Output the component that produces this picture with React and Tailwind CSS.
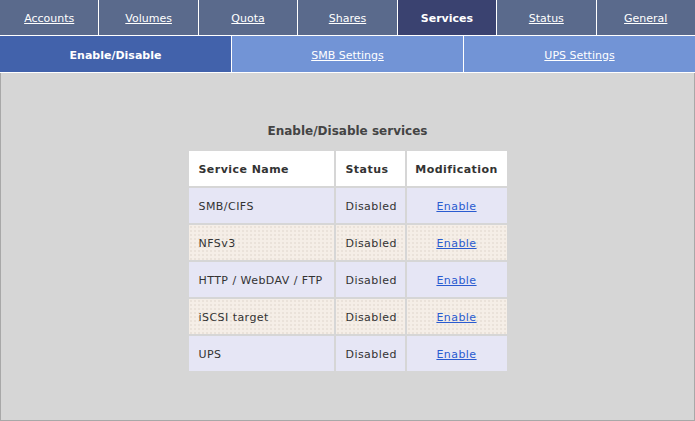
const mainTabs = ["Accounts", "Volumes", "Quota", "Shares", "Services", "Status", "General"];
const subTabs = ["Enable/Disable", "SMB Settings", "UPS Settings"];

const services = [
  { name: "SMB/CIFS", status: "Disabled" },
  { name: "NFSv3", status: "Disabled" },
  { name: "HTTP / WebDAV / FTP", status: "Disabled" },
  { name: "iSCSI target", status: "Disabled" },
  { name: "UPS", status: "Disabled" },
];

export default function App() {
  return (
    <div className="w-[695px] h-[421px] bg-white font-['DejaVu_Sans',Verdana,sans-serif] text-[11px] overflow-hidden">
      {/* main tabs */}
      <div className="flex gap-px h-[35px]">
        {mainTabs.map((t) =>
          t === "Services" ? (
            <div key={t} className="flex-1 flex items-center justify-center pt-[4px] bg-[#3a4270] text-white font-bold">
              {t}
            </div>
          ) : (
            <div key={t} className="flex-1 flex items-center justify-center pt-[4px] bg-[#5a6a8c] text-white underline">
              {t}
            </div>
          )
        )}
      </div>
      {/* sub tabs */}
      <div className="flex gap-px h-[36px] mt-px">
        {subTabs.map((t, i) =>
          i === 0 ? (
            <div key={t} className="flex-1 flex items-center justify-center pt-[4px] bg-[#4262ab] text-white font-bold">
              {t}
            </div>
          ) : (
            <div key={t} className="flex-1 flex items-center justify-center pt-[4px] bg-[#7294d6] text-white underline">
              {t}
            </div>
          )
        )}
      </div>
      {/* content */}
      <div className="mt-px h-[348px] bg-[#d6d6d6] border border-t-0 border-[#a8a8a8] pt-[51px]">
        <div className="text-center font-bold text-[12px] leading-[15px] text-[#444]">Enable/Disable services</div>
        <table className="mx-auto mt-[10px] border-separate border-spacing-[2px] text-[#333] tracking-[0.45px]">
          <thead>
            <tr className="h-[35px] bg-white text-[#333]">
              <th className="w-[145px] text-left pl-[10px] pt-[4px] font-bold">Service Name</th>
              <th className="w-[69px] text-left pl-[10px] pt-[4px] font-bold">Status</th>
              <th className="w-[100px] text-center pt-[4px] font-bold">Modification</th>
            </tr>
          </thead>
          <tbody>
            {services.map((s, i) => {
              const bg =
                i % 2 === 0
                  ? "bg-[#e6e6f5]"
                  : "bg-[#f5eee7] bg-[radial-gradient(#dcd3ca_0.6px,transparent_0.8px)] bg-[length:4px_4px]";
              return (
                <tr key={s.name} className="h-[35px]">
                  <td className={`${bg} pl-[10px] pt-[4px]`}>{s.name}</td>
                  <td className={`${bg} pl-[10px] pt-[4px]`}>{s.status}</td>
                  <td className={`${bg} text-center pt-[4px]`}>
                    <a href="#" className="text-[#2a5bd0] underline">
                      Enable
                    </a>
                  </td>
                </tr>
              );
            })}
          </tbody>
        </table>
      </div>
    </div>
  );
}
